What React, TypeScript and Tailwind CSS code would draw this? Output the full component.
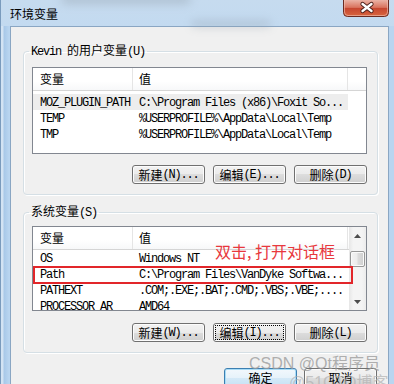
import React from 'react';

const CJK_SPLIT = /([\u3000-\u9fff\uff00-\uffef]+)/;
const CJK_TEST = /[\u3000-\u9fff\uff00-\uffef]/;

function Mixed({ text }: { text: string }) {
  const parts = text.split(CJK_SPLIT).filter((p) => p !== '');
  return (
    <>
      {parts.map((p, i) =>
        CJK_TEST.test(p) ? (
          <span key={i} className="font-['Noto_Sans_CJK_SC',sans-serif] tracking-normal">
            {p}
          </span>
        ) : (
          <span key={i} className="font-['Liberation_Mono',monospace] tracking-[-1.2px] whitespace-pre">
            {p}
          </span>
        )
      )}
    </>
  );
}

function Btn({ label, focus }: { label: string; focus?: boolean }) {
  return (
    <div
      className={
        focus
          ? 'w-[73px] h-[19px] rounded-[3px] border border-[#707070] bg-[linear-gradient(to_bottom,#f2f2f2_0%,#ebebeb_50%,#dddddd_50%,#cfcfcf_100%)] shadow-[inset_0_0_0_1px_#fcfcfc] flex items-center justify-center text-[12px] leading-[14px] text-black outline-1 outline-dotted outline-black -outline-offset-3'
          : 'w-[73px] h-[19px] rounded-[3px] border border-[#707070] bg-[linear-gradient(to_bottom,#f2f2f2_0%,#ebebeb_50%,#dddddd_50%,#cfcfcf_100%)] shadow-[inset_0_0_0_1px_#fcfcfc] flex items-center justify-center text-[12px] leading-[14px] text-black'
      }
    >
      <Mixed text={label} />
    </div>
  );
}

function Header() {
  return (
    <div className="h-[23px] flex border-b border-[#d5d5d5] bg-[linear-gradient(to_bottom,#ffffff,#ffffff_60%,#f7f8f9)] text-[12px] leading-[14px] shrink-0">
      <div className="w-[100px] border-r border-[#e5e5e5] pl-[7px] flex items-center">
        <Mixed text="变量" />
      </div>
      <div className="w-[215px] border-r border-[#e5e5e5] pl-[6px] flex items-center">
        <Mixed text="值" />
      </div>
      <div className="flex-1" />
    </div>
  );
}

function Row({ a, b, hl }: { a: string; b: string; hl?: boolean }) {
  return (
    <div
      className={
        hl
          ? 'h-[16px] w-[315px] flex items-center text-[12px] leading-[16px] bg-[#ededed] shrink-0'
          : 'h-[16px] w-[315px] flex items-center text-[12px] leading-[16px] shrink-0'
      }
    >
      <div className="w-[100px] pl-[7px] overflow-hidden whitespace-nowrap">
        <Mixed text={a} />
      </div>
      <div className="pl-[6px] whitespace-nowrap">
        <Mixed text={b} />
      </div>
    </div>
  );
}

function Arrow({ up }: { up?: boolean }) {
  return (
    <div className="h-[17px] flex items-center justify-center shrink-0">
      <svg width="7" height="4" viewBox="0 0 7 4">
        {up ? <path d="M0 4 L3.5 0 L7 4 Z" fill="#4d4d4d" /> : <path d="M0 0 L3.5 4 L7 0 Z" fill="#4d4d4d" />}
      </svg>
    </div>
  );
}

export default function App() {
  return (
    <div className="w-[394px] h-[384px] overflow-hidden relative flex flex-col border-l border-[#7a9bbd] bg-[linear-gradient(to_right,#d3e3f3_0px,#d3e3f3_2px,#a8c8e8_3px,#b9d5f0_8px,#b9d5f0_100%)] text-black">
      {/* title bar */}
      <div className="h-[26px] shrink-0 flex items-start justify-between bg-[linear-gradient(to_bottom,#c6dbef,#c3daf0)] relative">
        <div className="absolute left-[60px] top-[-6px] w-[130px] h-[10px] rounded-full bg-[#8d9aa6] opacity-40 blur-[5px]" />
        <div className="absolute left-[190px] top-[20px] w-[80px] h-[8px] rounded-full bg-[#8d9aa6] opacity-30 blur-[4px]" />
        <div className="relative ml-[9px] mt-[6px] text-[12px] leading-[16px] font-['Noto_Sans_CJK_SC',sans-serif] text-black">
          环境变量
        </div>
        <div className="relative mr-[5px] w-[46px] h-[17px]">
          <svg width="46" height="17" viewBox="0 0 46 17">
            <defs>
              <linearGradient id="cg" x1="0" y1="0" x2="0" y2="1">
                <stop offset="0" stopColor="#ebb3a6" />
                <stop offset="0.45" stopColor="#d9735e" />
                <stop offset="0.5" stopColor="#c64630" />
                <stop offset="1" stopColor="#d9663f" />
              </linearGradient>
            </defs>
            <path d="M0.5 0 V12.5 A4 4 0 0 0 4.5 16.5 H41.5 A4 4 0 0 0 45.5 12.5 V0" fill="url(#cg)" stroke="#6b2b22" />
            <path d="M1.5 0 V12 A3.5 3.5 0 0 0 5 15.5 H41 A3.5 3.5 0 0 0 44.5 12 V0" fill="none" stroke="#f1c4b8" strokeOpacity="0.6" />
            <path d="M19.5 4 L28.5 11 M28.5 4 L19.5 11" stroke="#4a1f1a" strokeWidth="4.2" strokeLinecap="round" />
            <path d="M19.5 4 L28.5 11 M28.5 4 L19.5 11" stroke="#ffffff" strokeWidth="2.4" strokeLinecap="round" />
          </svg>
        </div>
      </div>

      {/* client */}
      <div className="ml-[9px] w-[379px] flex-1 bg-[#f0f0f0] border-l border-t border-r border-[#8aa6c3] flex flex-col text-[12px]">
        {/* user vars */}
        <fieldset className="ml-[12px] mt-[16px] w-[355px] border border-[#d5dfe5] rounded-[4px] pl-[8px] pr-[10px] pt-[8px] pb-[10px] shadow-[inset_1px_1px_0_#ffffff,1px_1px_0_#ffffff]">
          <legend className="ml-[-3px] px-[2px] text-[12px] leading-[14px]">
            <Mixed text="Kevin 的用户变量(U)" />
          </legend>
          <div className="w-[335px] flex flex-col">
            <div className="w-[335px] h-[87px] border border-[#828790] bg-white overflow-hidden flex flex-col">
              <Header />
              <div className="h-[3px] shrink-0" />
              <Row a="MOZ_PLUGIN_PATH" b="C:\Program Files (x86)\Foxit So..." hl />
              <Row a="TEMP" b="%USERPROFILE%\AppData\Local\Temp" />
              <Row a="TMP" b="%USERPROFILE%\AppData\Local\Temp" />
            </div>
            <div className="mt-[11px] flex justify-end gap-[8px]">
              <Btn label="新建(N)..." />
              <Btn label="编辑(E)..." />
              <Btn label="删除(D)" />
            </div>
          </div>
        </fieldset>

        {/* system vars */}
        <fieldset className="ml-[12px] mt-[9px] w-[355px] border border-[#d5dfe5] rounded-[4px] pl-[8px] pr-[10px] pt-[6px] pb-[10px] shadow-[inset_1px_1px_0_#ffffff,1px_1px_0_#ffffff]">
          <legend className="ml-[-3px] px-[2px] text-[12px] leading-[14px]">
            <Mixed text="系统变量(S)" />
          </legend>
          <div className="w-[335px] flex flex-col">
            <div className="relative w-[335px] h-[85px] border border-[#828790] bg-white overflow-hidden flex">
              <div className="flex-1 flex flex-col overflow-hidden">
                <Header />
                <Row a="OS" b="Windows NT" />
                <Row a="Path" b="C:\Program Files\VanDyke Softwa..." />
                <Row a="PATHEXT" b=".COM;.EXE;.BAT;.CMD;.VBS;.VBE;...." />
                <Row a="PROCESSOR_AR" b="AMD64" />
              </div>
              <div className="w-[17px] shrink-0 flex flex-col bg-[linear-gradient(to_right,#e6e6e6,#f4f4f4_25%,#f4f4f4_75%,#ececec)]">
                <Arrow up />
                <div className="h-[7px] shrink-0" />
                <div className="mx-[1px] h-[16px] shrink-0 rounded-[2px] border border-[#979797] bg-[linear-gradient(to_right,#f4f4f4,#ececec_45%,#dcdcdc_55%,#cfcfcf)] shadow-[inset_0_0_0_1px_#fafafa]" />
                <div className="flex-1" />
                <Arrow />
              </div>
              {/* annotation overlays */}
              <div className="absolute left-0 top-[39px] w-[320px] h-[18px] border-2 border-[#e2262a]" />
              <div className="absolute left-[182px] top-[14px] text-[16px] leading-[20px] text-[#e8383d] font-['Noto_Sans_CJK_SC',sans-serif] whitespace-nowrap">
                双击, 打开对话框
              </div>
            </div>
            <div className="mt-[12px] flex justify-end gap-[8px]">
              <Btn label="新建(W)..." />
              <Btn label="编辑(I)..." focus />
              <Btn label="删除(L)" />
            </div>
          </div>
        </fieldset>

        {/* ok / cancel */}
        <div className="mt-[15px] pr-[11px] flex justify-end gap-[7px]">
          <div className="w-[73px] h-[20px] rounded-[3px] border border-[#3c7fb1] bg-[linear-gradient(to_bottom,#f2f8fc_0%,#e6f2fa_50%,#d4e9f7_50%,#c6e1f4_100%)] shadow-[inset_0_0_0_1px_#a8dcf7] flex items-center justify-center text-[12px] leading-[14px]">
            <Mixed text="确定" />
          </div>
          <div className="w-[73px] h-[20px] rounded-[3px] border border-[#707070] bg-[linear-gradient(to_bottom,#f2f2f2_0%,#ebebeb_50%,#dddddd_50%,#cfcfcf_100%)] shadow-[inset_0_0_0_1px_#fcfcfc] flex items-center justify-center text-[12px] leading-[14px]">
            <Mixed text="取消" />
          </div>
        </div>
      </div>

      {/* watermark */}
      <div className="absolute left-[248px] top-[354px] text-[16px] leading-[20px] font-['Liberation_Sans','Noto_Sans_CJK_SC',sans-serif] text-[#9c9c9c]/80 whitespace-nowrap">
        CSDN @Qt程序员
      </div>
      <div className="absolute left-[288px] top-[373px] text-[16px] leading-[20px] font-['Liberation_Sans','Noto_Sans_CJK_SC',sans-serif] text-[#b0b0b0]/70 whitespace-nowrap">
        @51CTO博客
      </div>
    </div>
  );
}
